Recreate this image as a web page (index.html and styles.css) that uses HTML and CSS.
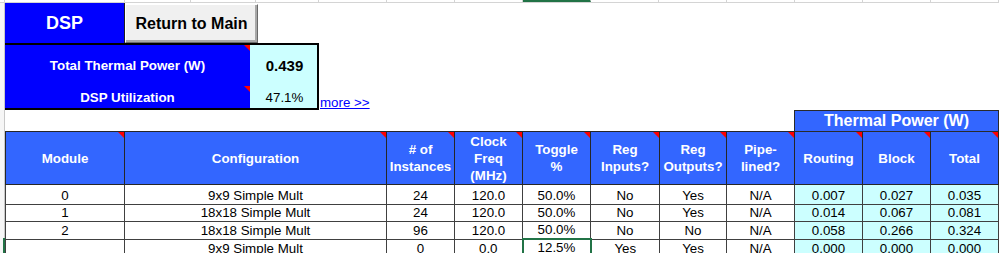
FILE: index.html
```html
<!DOCTYPE html>
<html lang="en">
<head>
    <meta charset="UTF-8">
    <meta name="viewport" content="width=device-width, initial-scale=1.0">
    <title>DSP</title>
    <link rel="stylesheet" href="styles.css">
</head>
<body>
    <div class="colhdr">
        <span class="c0"></span>
        <span class="ca"></span>
        <span class="cb"></span>
        <span class="cc"></span>
        <span class="cd"></span>
        <span></span>
        <span></span>
        <span></span>
        <span class="on"></span>
        <span></span>
        <span></span>
        <span></span>
        <span></span>
        <span></span>
        <span></span>
    </div>
    <div class="sheet">
        <div class="rowhdr"></div>
        <div class="main">
            <div class="titlebar">
                <div class="title">DSP</div>
                <button class="back">Return to Main</button>
            </div>
            <div class="summary-row">
                <div class="summary">
                    <div class="label note">Total Thermal Power (W)</div>
                    <div class="value big">0.439</div>
                    <div class="label note">DSP Utilization</div>
                    <div class="value">47.1%</div>
                </div>
                <a class="more" href="#">more &gt;&gt;</a>
            </div>
            <table class="power">
                <colgroup>
                    <col class="w-mod">
                    <col class="w-cfg">
                    <col class="w-68">
                    <col class="w-68">
                    <col class="w-68">
                    <col class="w-69">
                    <col class="w-67">
                    <col class="w-68">
                    <col class="w-68">
                    <col class="w-68">
                    <col class="w-68">
                </colgroup>
                <tr class="blank">
                    <td></td><td></td><td></td><td></td><td></td><td></td><td></td><td></td>
                    <th class="group" colspan="3">Thermal Power (W)</th>
                </tr>
                <tr class="head">
                    <th class="note">Module</th>
                    <th class="note">Configuration</th>
                    <th class="note"># of<br>Instances</th>
                    <th class="note">Clock<br>Freq<br>(MHz)</th>
                    <th class="note">Toggle<br>%</th>
                    <th class="note">Reg<br>Inputs?</th>
                    <th class="note">Reg<br>Outputs?</th>
                    <th class="note">Pipe-<br>lined?</th>
                    <th class="note">Routing</th>
                    <th class="note">Block</th>
                    <th class="note">Total</th>
                </tr>
                <tr class="data first">
                    <td>0</td><td>9x9 Simple Mult</td><td>24</td><td>120.0</td><td>50.0%</td>
                    <td>No</td><td>Yes</td><td>N/A</td>
                    <td class="calc">0.007</td><td class="calc">0.027</td><td class="calc">0.035</td>
                </tr>
                <tr class="data">
                    <td>1</td><td>18x18 Simple Mult</td><td>24</td><td>120.0</td><td>50.0%</td>
                    <td>No</td><td>Yes</td><td>N/A</td>
                    <td class="calc">0.014</td><td class="calc">0.067</td><td class="calc">0.081</td>
                </tr>
                <tr class="data">
                    <td>2</td><td>18x18 Simple Mult</td><td>96</td><td>120.0</td><td>50.0%</td>
                    <td>No</td><td>No</td><td>N/A</td>
                    <td class="calc">0.058</td><td class="calc">0.266</td><td class="calc">0.324</td>
                </tr>
                <tr class="data">
                    <td></td><td>9x9 Simple Mult</td><td>0</td><td>0.0</td><td class="sel">12.5%</td>
                    <td>Yes</td><td>Yes</td><td>N/A</td>
                    <td class="calc">0.000</td><td class="calc">0.000</td><td class="calc">0.000</td>
                </tr>
            </table>
        </div>
    </div>
</body>
</html>
```

FILE: styles.css
```css
*{
    margin: 0;
    padding: 0;
    box-sizing: border-box;
}
body{
    font-family: "Liberation Sans", Arial, sans-serif;
    font-size: 13.33px;
    color: #000;
    background: #fff;
    width: 999px;
    height: 253px;
    overflow: hidden;
}

/* sheet column headers, only the bottom edge shows */
.colhdr{
    display: flex;
    height: 3px;
    border-bottom: 1px solid #d4d4d4;
}
.colhdr span{
    flex: none;
    width: 68px;
    height: 2px;
    border-right: 1px solid #d4d4d4;
}
.colhdr .c0{ width: 5px; }
.colhdr .ca{ width: 120px; }
.colhdr .cb{ width: 66px; }
.colhdr .cc{ width: 65px; }
.colhdr .cd{ width: 63px; }
.colhdr .on{ border-bottom: 2px solid #217346; }

.sheet{
    display: flex;
}
/* row headers, row of the active cell in green */
.rowhdr{
    flex: none;
    width: 5px;
    height: 250px;
    background:
        linear-gradient(#217346, #217346) right 235px / 2px 20px no-repeat,
        linear-gradient(#c8c8c8, #c8c8c8) right top / 1px 100% no-repeat,
        #f6f6f6;
}
.main{
    flex: 1;
}

.titlebar{
    display: flex;
    height: 40px;
}
.title{
    width: 120px;
    background: #0000ff;
    color: #fff;
    font-size: 18px;
    font-weight: bold;
    display: flex;
    align-items: center;
    justify-content: center;
    border-right: 1px solid #202020;
}
.back{
    width: 133px;
    height: 39px;
    margin-top: 1px;
    background: #f0f0f0;
    border: 1px solid;
    border-color: #fff #6a6a6a #6a6a6a #fff;
    box-shadow: inset -2px -2px 0 #a8a8a8;
    font: bold 16px "Liberation Sans", Arial, sans-serif;
    color: #000;
}

.summary-row{
    display: flex;
    height: 67px;
}
.summary{
    width: 314px;
    display: grid;
    grid-template-columns: 245px 67px;
    grid-template-rows: 41px 22px;
    border: 2px solid #000;
    border-left: 0;
}
.label{
    background: #0000ff;
    color: #fff;
    font-weight: bold;
    display: flex;
    align-items: center;
    justify-content: center;
}
.value{
    background: #ccffff;
    display: flex;
    align-items: center;
    justify-content: center;
    padding-left: 2px;
}
.value.big{
    font-size: 15px;
    font-weight: bold;
}
.more{
    align-self: flex-end;
    margin-left: 1px;
    line-height: 15px;
    color: #0000ff;
    text-decoration: underline;
}

/* the module table */
.power{
    border-collapse: collapse;
    table-layout: fixed;
    width: 993px;
}
.w-mod{ width: 119px; }
.w-cfg{ width: 262px; }
.w-67{ width: 67px; }
.w-68{ width: 68px; }
.w-69{ width: 69px; }
.power td,.power th{
    border: 1px solid #404040;
    text-align: center;
    padding: 0 1px;
    position: relative;
}
.power .blank td{
    border: 0;
    height: 21px;
}
.power .group{
    background: #3366ff;
    color: #fff;
    font-size: 16px;
    border-color: #2a2a2a;
}
.head th{
    height: 53px;
    background: #3366ff;
    color: #fff;
    line-height: 17px;
    border-color: #262626;
}
.data td{
    height: 17px;
    line-height: 16px;
    vertical-align: bottom;
    white-space: nowrap;
}
.data.first td{
    height: 20px;
}
.power .calc{
    background: #ccffff;
}
.power .sel{
    border: 2px solid #217346;
}

/* comment marker in the corner of a cell */
.note{
    position: relative;
}
.note::after{
    content: "";
    position: absolute;
    top: 0;
    right: 0;
    border-top: 6px solid #ff0000;
    border-left: 6px solid transparent;
}
```
